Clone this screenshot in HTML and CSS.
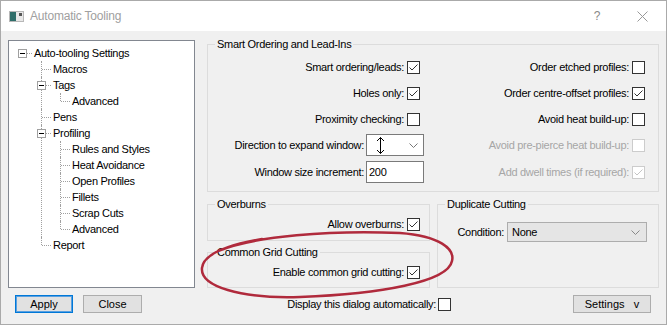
FILE: index.html
```html
<!DOCTYPE html>
<html>
<head>
  <title>Automatic Tooling</title>
  <link rel="stylesheet" href="styles.css">
</head>
<body>
<div class="window">
  <div class="titlebar">
    <svg class="app-icon" width="15" height="11" viewBox="0 0 15 11">
      <rect x="0.5" y="0.5" width="14" height="10" fill="#e8e8e8" stroke="#b8b8b8"/>
      <rect x="1" y="1" width="6" height="9" fill="#2f6e6a"/>
      <rect x="10" y="2" width="3" height="3" fill="#555"/>
    </svg>
    <span class="title">Automatic Tooling</span>
    <span class="help">?</span>
    <svg class="close-x" width="11" height="11" viewBox="0 0 11 11">
      <path d="M0.5 0.5 L10.5 10.5 M10.5 0.5 L0.5 10.5" stroke="#999" stroke-width="1"/>
    </svg>
  </div>

  <div class="body">
    <div class="main">
      <div class="tree">
        <ul>
          <li><span class="exp"></span><div class="row">Auto-tooling Settings</div>
            <ul>
              <li><div class="row">Macros</div></li>
              <li><span class="exp"></span><div class="row">Tags</div>
                <ul>
                  <li><div class="row">Advanced</div></li>
                </ul>
              </li>
              <li><div class="row">Pens</div></li>
              <li><span class="exp"></span><div class="row">Profiling</div>
                <ul>
                  <li><div class="row">Rules and Styles</div></li>
                  <li><div class="row">Heat Avoidance</div></li>
                  <li><div class="row">Open Profiles</div></li>
                  <li><div class="row">Fillets</div></li>
                  <li><div class="row">Scrap Cuts</div></li>
                  <li><div class="row">Advanced</div></li>
                </ul>
              </li>
              <li><div class="row">Report</div></li>
            </ul>
          </li>
        </ul>
      </div>

      <div class="settings">
        <fieldset class="group smart">
          <legend>Smart Ordering and Lead-Ins</legend>
          <div class="opts">
            <div class="opt">Smart ordering/leads:<span class="box on"><svg viewBox="0 0 11 11"><path d="M1.5 5.5 L4 8 L9.5 2.5"/></svg></span></div>
            <div class="opt r">Order etched profiles:<span class="box"></span></div>

            <div class="opt">Holes only:<span class="box on"><svg viewBox="0 0 11 11"><path d="M1.5 5.5 L4 8 L9.5 2.5"/></svg></span></div>
            <div class="opt r">Order centre-offset profiles:<span class="box on"><svg viewBox="0 0 11 11"><path d="M1.5 5.5 L4 8 L9.5 2.5"/></svg></span></div>

            <div class="opt">Proximity checking:<span class="box"></span></div>
            <div class="opt r">Avoid heat build-up:<span class="box"></span></div>

            <div class="opt wide">Direction to expand window:
              <span class="combo">
                <svg width="9" height="17" viewBox="0 0 9 17"><path d="M4.5 0.5 V16.5 M1 4 L4.5 0.5 L8 4 M1 13 L4.5 16.5 L8 13" fill="none" stroke="#000" stroke-width="1"/></svg>
                <svg width="9" height="5" viewBox="0 0 9 5"><path d="M0.5 0.5 L4.5 4.5 L8.5 0.5" fill="none" stroke="#777" stroke-width="1"/></svg>
              </span>
            </div>
            <div class="opt r off">Avoid pre-pierce heat build-up:<span class="box"></span></div>

            <div class="opt wide">Window size increment:<span class="field">200</span></div>
            <div class="opt r off">Add dwell times (if required):<span class="box on"><svg viewBox="0 0 11 11"><path d="M1.5 5.5 L4 8 L9.5 2.5"/></svg></span></div>
          </div>
        </fieldset>

        <div class="lower">
          <div class="stack">
            <fieldset class="group overburns">
              <legend>Overburns</legend>
              <div class="opt">Allow overburns:<span class="box on"><svg viewBox="0 0 11 11"><path d="M1.5 5.5 L4 8 L9.5 2.5"/></svg></span></div>
            </fieldset>
            <fieldset class="group common">
              <legend>Common Grid Cutting</legend>
              <div class="opt">Enable common grid cutting:<span class="box on"><svg viewBox="0 0 11 11"><path d="M1.5 5.5 L4 8 L9.5 2.5"/></svg></span></div>
            </fieldset>
          </div>
          <fieldset class="group duplicate">
            <legend>Duplicate Cutting</legend>
            <div class="dup-row">Condition:
              <span class="select">None
                <svg width="9" height="5" viewBox="0 0 9 5"><path d="M0.5 0.5 L4.5 4.5 L8.5 0.5" fill="none" stroke="#888" stroke-width="1"/></svg>
              </span>
            </div>
          </fieldset>
        </div>
      </div>
    </div>

    <div class="footer">
      <button class="btn apply">Apply</button>
      <button class="btn close">Close</button>
      <div class="display">Display this dialog automatically:<span class="box"></span></div>
      <button class="btn settings-btn">Settings&nbsp;&nbsp;&nbsp;v</button>
    </div>
  </div>

  <svg class="annotation" width="667" height="325" viewBox="0 0 667 325">
    <path d="M218 251 C255 236 330 230 400 233 C440 236 455 249 452 261 C448 282 380 294 300 297 C240 299 200 286 202 268 C203 256 222 246 262 239" fill="none" stroke="#b02a3c" stroke-width="2.5" stroke-linecap="round"/>
  </svg>
</div>
</body>
</html>
```

FILE: styles.css
```css
*
{
    box-sizing: border-box;
}

body
{
    margin: 0;
    background: #fff;
    font-family: "Liberation Sans", Arial, sans-serif;
    font-size: 11px;
    letter-spacing: -0.3px;
    color: #000;
}

.window
{
    position: relative;
    width: 667px;
    height: 325px;
    border: 1px solid #aaa;
    background: #f0f0f0;
    display: flex;
    flex-direction: column;
}

/* title bar */
.titlebar
{
    flex: none;
    height: 30px;
    background: #fff;
    display: flex;
    align-items: center;
    padding: 0 18px 0 8px;
}

.app-icon
{
    margin-right: 6px;
}

.title
{
    font-size: 12px;
    letter-spacing: -0.2px;
    color: #a0a0a0;
}

.help
{
    margin-left: auto;
    font-size: 12px;
    color: #888;
}

.close-x
{
    margin-left: 37px;
}

/* body */
.body
{
    flex: 1;
    padding: 7px 7px 0 7px;
    display: flex;
    flex-direction: column;
}

.main
{
    display: flex;
    gap: 12px;
    height: 250px;
}

/* tree */
.tree
{
    width: 187px;
    height: 248px;
    margin-top: 2px;
    background: #fff;
    border: 1px solid #828790;
    padding: 4px 0 0 13px;
}

.tree ul
{
    list-style: none;
    margin: 0;
    padding: 0 0 0 19px;
}

.tree > ul
{
    padding-left: 0;
}

.tree li
{
    position: relative;
}

.tree .row
{
    height: 16px;
    line-height: 16px;
    padding-left: 12px;
    white-space: nowrap;
}

.tree ul ul > li::before
{
    content: "";
    position: absolute;
    left: 0;
    top: 0;
    bottom: 0;
    border-left: 1px dotted #a0a0a0;
}

.tree ul ul > li:last-child::before
{
    bottom: auto;
    height: 8px;
}

.tree li::after
{
    content: "";
    position: absolute;
    left: 1px;
    top: 8px;
    width: 9px;
    border-top: 1px dotted #a0a0a0;
}

.exp
{
    position: absolute;
    left: -4px;
    top: 4px;
    width: 9px;
    height: 9px;
    border: 1px solid #a0a0a0;
    background: #fff;
    z-index: 1;
}

.exp::after
{
    content: "";
    position: absolute;
    left: 1px;
    top: 3px;
    width: 5px;
    height: 1px;
    background: #000;
}

/* group boxes */
.settings
{
    width: 452px;
    display: flex;
    flex-direction: column;
    gap: 6px;
}

.group
{
    margin: 0;
    padding: 0;
    min-width: 0;
    border: 1px solid #dcdcdc;
}

.group legend
{
    margin-left: 7px;
    padding: 0 2px;
    line-height: 13px;
}

.smart
{
    height: 154px;
}

.opts
{
    display: grid;
    grid-template-columns: 222px 1fr;
    grid-template-rows: 26px 26px 26px 26px 28px;
    column-gap: 7px;
    padding-top: 3px;
}

.opt
{
    display: flex;
    align-items: center;
    justify-content: flex-end;
    gap: 3px;
    padding-right: 10px;
    white-space: nowrap;
}

.opt.r
{
    padding-right: 13px;
}

.opt.wide
{
    padding-right: 6px;
    gap: 2px;
}

.opt.off
{
    color: #a6a6a6;
}

.box
{
    width: 13px;
    height: 13px;
    border: 1px solid #333;
    background: #fff;
    display: flex;
}

.box svg
{
    width: 11px;
    height: 11px;
    fill: none;
    stroke: #333;
    stroke-width: 1;
}

.off .box
{
    border-color: #ccc;
}

.off .box svg
{
    stroke: #c4c4c4;
}

.combo
{
    width: 58px;
    height: 22px;
    background: #fff;
    border: 1px solid #7a7a7a;
    display: flex;
    align-items: center;
    justify-content: space-between;
    padding: 0 5px 0 9px;
}

.field
{
    width: 58px;
    height: 22px;
    line-height: 20px;
    background: #fff;
    border: 1px solid #7a7a7a;
    padding-left: 2px;
}

.lower
{
    display: grid;
    grid-template-columns: 223px 222px;
    column-gap: 7px;
    height: 90px;
}

.stack
{
    display: flex;
    flex-direction: column;
    gap: 5px;
}

.overburns
{
    height: 43px;
}

.common
{
    height: 42px;
}

.overburns .opt, .common .opt
{
    height: 20px;
    margin-top: 3px;
    padding-right: 9px;
}

.duplicate
{
    height: 90px;
}

.dup-row
{
    display: flex;
    align-items: center;
    justify-content: flex-end;
    gap: 3px;
    padding: 11px 11px 0 0;
}

.select
{
    width: 140px;
    height: 20px;
    background: #e5e5e5;
    border: 1px solid #adadad;
    display: flex;
    align-items: center;
    justify-content: space-between;
    padding: 0 6px 0 4px;
}

/* footer */
.footer
{
    display: flex;
    align-items: center;
    height: 18px;
    margin-top: 7px;
    padding: 0 8px 0 7px;
}

.btn
{
    height: 18px;
    padding: 0;
    border: 1px solid #adadad;
    background: #e1e1e1;
    font: inherit;
    color: #000;
}

.apply
{
    width: 58px;
    border-color: #0078d7;
    box-shadow: inset 0 0 0 1px #5aa0e0;
}

.close
{
    width: 59px;
    margin-left: 10px;
}

.display
{
    margin-left: auto;
    display: flex;
    align-items: center;
    gap: 2px;
}

.settings-btn
{
    width: 78px;
    margin-left: 122px;
}

.annotation
{
    position: absolute;
    left: -1px;
    top: -1px;
    pointer-events: none;
}
```
